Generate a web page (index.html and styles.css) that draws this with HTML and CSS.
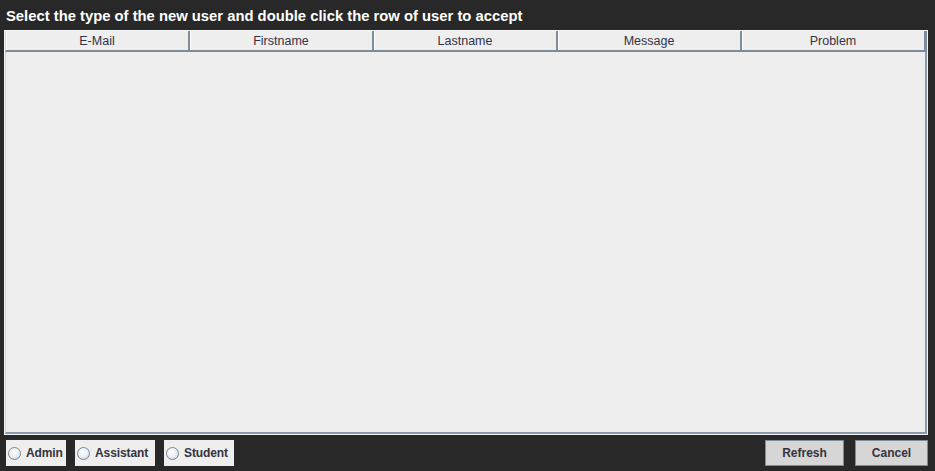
FILE: index.html
```html
<!DOCTYPE html>
<html>
<head>
<meta charset="utf-8">
<link rel="stylesheet" href="styles.css">
</head>
<body>
<div class="app">
  <div class="title">Select the type of the new user and double click the row of user to accept</div>
  <div class="table">
    <div class="thead">
      <div class="th">E-Mail</div>
      <div class="th">Firstname</div>
      <div class="th">Lastname</div>
      <div class="th">Message</div>
      <div class="th last">Problem</div>
    </div>
    <div class="tbody"></div>
  </div>
  <div class="footer">
    <div class="radios">
      <label class="radio w-admin"><span class="dot"></span>Admin</label>
      <label class="radio w-assistant"><span class="dot"></span>Assistant</label>
      <label class="radio w-student"><span class="dot"></span>Student</label>
    </div>
    <div class="buttons">
      <button class="btn w-refresh">Refresh</button>
      <button class="btn w-cancel">Cancel</button>
    </div>
  </div>
</div>
</body>
</html>
```

FILE: styles.css
```css
html, body {
  margin: 0;
  padding: 0;
  background: #282828;
}
.app {
  width: 935px;
  height: 471px;
  display: flex;
  flex-direction: column;
  font-family: "Liberation Sans", Arial, sans-serif;
}
.title {
  height: 30px;
  box-sizing: border-box;
  padding: 7px 0 0 6px;
  line-height: 18px;
  font-size: 14.8px;
  font-weight: bold;
  color: #ffffff;
}
.table {
  margin: 0 7px 0 4px;
  height: 405px;
  box-sizing: border-box;
  border: 1px solid #f4f6f8;
  display: flex;
  flex-direction: column;
  background: #eeeeee;
}
.thead {
  display: flex;
  height: 21px;
  box-sizing: border-box;
  border-bottom: 2px solid #7d8c9b;
  border-left: 1px solid #c9d3dc;
}
.th {
  flex: 1;
  text-align: center;
  font-size: 12.5px;
  line-height: 20px;
  color: #333344;
  border-right: 2px solid #7d8c9b;
  box-shadow: inset 1px 0 0 #ffffff;
}
.th.last {
  border-right: 3px solid #7d8c9b;
}
.tbody {
  flex: 1;
  border-left: 1px solid #c9d3dc;
  border-right: 2px solid #8b9aa8;
  border-bottom: 2px solid #8b9aa8;
}
.footer {
  flex: 1;
  display: flex;
  justify-content: space-between;
  align-items: flex-start;
  padding: 5px 7px 0 6px;
}
.radios, .buttons {
  display: flex;
}
.radios {
  gap: 9px;
}
.buttons {
  gap: 11px;
}
.radio {
  height: 26px;
  box-sizing: border-box;
  background: #eeeeee;
  display: flex;
  align-items: center;
  padding-left: 2px;
  font-size: 12px;
  font-weight: bold;
  letter-spacing: -0.1px;
  color: #333340;
}
.dot {
  width: 11px;
  height: 11px;
  border-radius: 50%;
  border: 1px solid #7a8694;
  background: radial-gradient(circle at 45% 35%, #ffffff 0%, #e6edf5 55%, #b9c9da 100%);
  margin-right: 5px;
}
.w-admin { width: 60px; }
.w-assistant { width: 80px; }
.w-student { width: 70px; }
.btn {
  height: 26px;
  box-sizing: border-box;
  background: #d6d6d6;
  border: 1px solid #7d8c9b;
  font-family: "Liberation Sans", Arial, sans-serif;
  font-size: 12px;
  font-weight: bold;
  color: #333340;
  padding: 0;
}
.w-refresh { width: 79px; }
.w-cancel { width: 73px; }
```
